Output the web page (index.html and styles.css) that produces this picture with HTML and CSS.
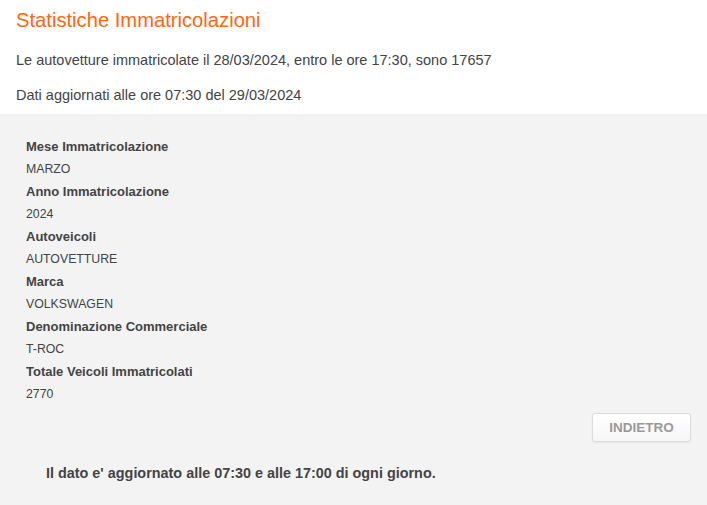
FILE: index.html
```html
<!DOCTYPE html>
<html lang="it">
<head>
    <meta charset="UTF-8">
    <meta name="viewport" content="width=device-width, initial-scale=1.0">
    <title>Statistiche Immatricolazioni</title>
    <link rel="stylesheet" href="styles.css">
</head>
<body>

    <div class="intro">
        <h1>Statistiche Immatricolazioni</h1>
        <p class="summary">Le autovetture immatricolate il 28/03/2024, entro le ore 17:30, sono 17657</p>
        <p class="updated">Dati aggiornati alle ore 07:30 del 29/03/2024</p>
    </div>

    <div class="results">
        <dl class="details">
            <dt>Mese Immatricolazione</dt>
            <dd>MARZO</dd>
            <dt>Anno Immatricolazione</dt>
            <dd>2024</dd>
            <dt>Autoveicoli</dt>
            <dd>AUTOVETTURE</dd>
            <dt>Marca</dt>
            <dd>VOLKSWAGEN</dd>
            <dt>Denominazione Commerciale</dt>
            <dd>T-ROC</dd>
            <dt>Totale Veicoli Immatricolati</dt>
            <dd>2770</dd>
        </dl>
        <div class="actions">
            <button type="button" class="btn-back">INDIETRO</button>
        </div>
        <p class="note">Il dato e' aggiornato alle 07:30 e alle 17:00 di ogni giorno.</p>
    </div>

</body>
</html>
```

FILE: styles.css
```css
body {
    font-family: "Liberation Sans", Arial, Helvetica, sans-serif;
    font-size: 14.5px;
    color: #444;
    background-color: #f3f3f3;
    margin: 0;
}
.intro {
    background-color: #ffffff;
    padding: 8px 16px 10px;
}
.intro h1 {
    margin: 0;
    font-size: 20.2px;
    font-weight: normal;
    line-height: 24px;
    color: #ff6610;
}
.intro p {
    margin: 0;
    line-height: 18px;
}
.summary {
    padding-top: 19px;
}
.updated {
    padding-top: 17px;
}
.results {
    padding: 22px 16px 30px 26px;
}
.details {
    margin: 0;
    line-height: 22.45px;
}
.details dt {
    font-size: 13px;
    font-weight: bold;
}
.details dd {
    margin: 0;
    font-size: 12.3px;
}
.actions {
    display: flex;
    justify-content: flex-end;
    margin-top: 8px;
}
.btn-back {
    font-family: inherit;
    font-size: 13.5px;
    font-weight: bold;
    color: #999;
    width: 99px;
    height: 29px;
    border: 1px solid #dcdcdc;
    border-radius: 3px;
    background: linear-gradient(#ffffff, #f6f6f6);
    box-shadow: 0 1px 2px rgba(0, 0, 0, 0.06);
    cursor: pointer;
}
.note {
    margin: 22px 0 0 20px;
    font-size: 14.4px;
    font-weight: bold;
    line-height: 18px;
}
```
